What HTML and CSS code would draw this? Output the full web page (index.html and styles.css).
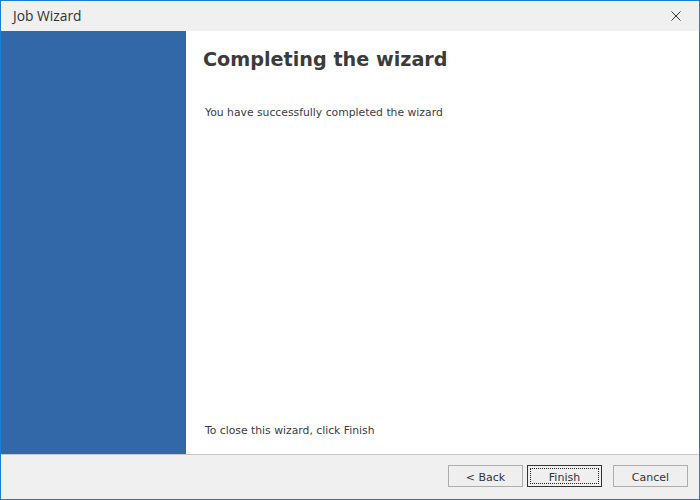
FILE: index.html
```html
<!DOCTYPE html>
<html>
<head>
<meta charset="utf-8">
<link rel="stylesheet" href="styles.css">
</head>
<body>
<div class="window">
  <div class="titlebar">
    <span class="title">Job Wizard</span>
    <span class="close">
      <svg width="10" height="10" viewBox="0 0 10 10"><path d="M0.5 0.5 L9.5 9.5 M9.5 0.5 L0.5 9.5" stroke="#333" stroke-width="1" fill="none"/></svg>
    </span>
  </div>
  <div class="main">
    <div class="side"></div>
    <div class="content">
      <h1 class="heading">Completing the wizard</h1>
      <p class="text">You have successfully completed the wizard</p>
      <p class="text bottom">To close this wizard, click Finish</p>
    </div>
  </div>
  <div class="footer">
    <button class="btn">&lt; Back</button>
    <button class="btn focus">Finish</button>
    <button class="btn cancel">Cancel</button>
  </div>
</div>
</body>
</html>
```
FILE: styles.css
```css
html, body { margin: 0; padding: 0; }
body { width: 700px; height: 500px; overflow: hidden; background: #fff; }
.window {
  width: 700px; height: 500px; box-sizing: border-box;
  border: 1px solid #1a7fd4;
  display: flex; flex-direction: column;
  font-family: "DejaVu Sans", sans-serif;
}
.titlebar {
  height: 30px; flex: none; background: #f0f0f0;
  display: flex; align-items: center; justify-content: space-between;
}
.title {
  font-family: "Open Sans", sans-serif; font-size: 13.8px; color: #333;
  padding-left: 12px; line-height: 30px;
}
.close { width: 46px; height: 30px; display: flex; align-items: center; justify-content: center; }
.main { flex: 1; display: flex; min-height: 0; }
.side { width: 185px; flex: none; background: #3267a8; }
.content {
  flex: 1; background: #fff; display: flex; flex-direction: column;
  padding: 17px 0 17px 17px;
}
.heading {
  margin: 0; font-size: 19.2px; line-height: 24px; font-weight: bold; color: #3b3b3b;
}
.text {
  margin: 34px 0 0 2px; font-size: 10.8px; line-height: 13px; color: #3b3b47;
}
.text.bottom { margin-top: auto; }
.footer {
  height: 45px; flex: none; background: #f0f0f0; border-top: 1px solid #c8c8c8;
  display: flex; align-items: flex-start; justify-content: flex-end;
  padding: 10px 11px 0 0; box-sizing: border-box;
}
.btn {
  width: 75px; height: 22px; box-sizing: border-box; margin: 0 0 0 4px; padding: 3px 0 0;
  border: 1px solid #adadad; background: #efefef; color: #333;
  font-family: "DejaVu Sans", sans-serif; font-size: 11px; line-height: 13px; position: relative;
}
.btn.focus { border-color: #333; }
.btn.focus::after {
  content: ""; position: absolute; left: 2px; top: 2px; right: 2px; bottom: 2px;
  border: 1px dotted #222;
}
.btn.cancel { margin-left: 11px; }
```
